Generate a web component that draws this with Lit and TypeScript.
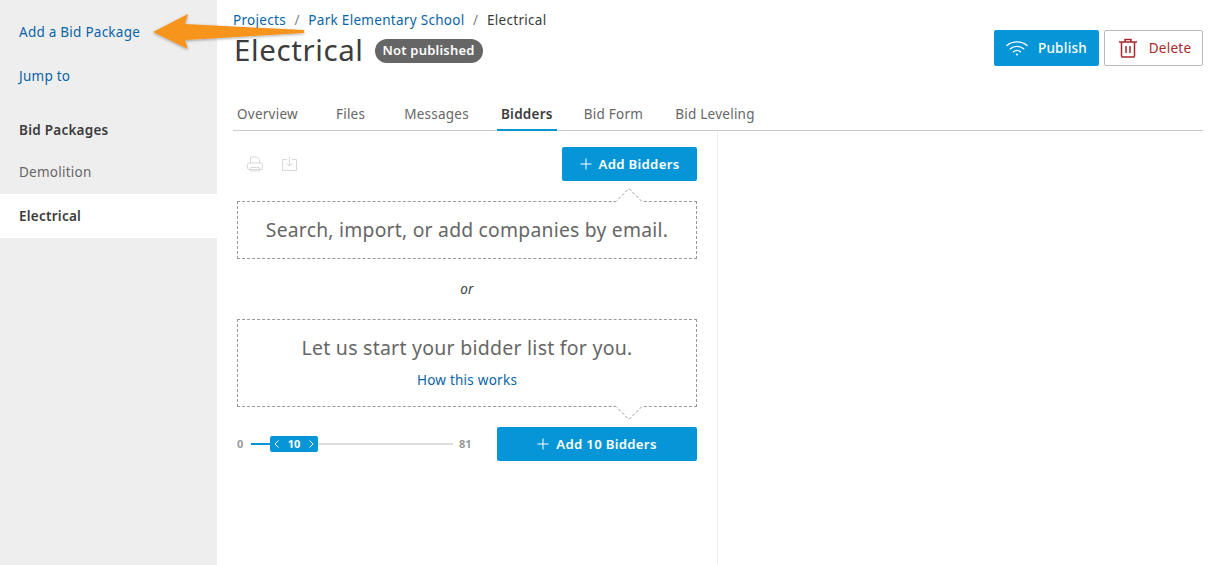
import { LitElement, html, css } from "lit";
import { customElement } from "lit/decorators.js";

const plus = html`<svg class="plus" width="12" height="12" viewBox="0 0 12 12"><path d="M6 .5v11M.5 6h11" stroke="#fff" stroke-width="1" fill="none"/></svg>`;

@customElement("app-root")
export class AppRoot extends LitElement {
  static styles = css`
    :host { display: block; height: 565px; overflow: hidden; font-family: "Noto Sans", sans-serif; font-size: 13.5px; color: #3c3c3c; letter-spacing: .25px; position: relative; background: #fff; }
    * { box-sizing: border-box; }
    a { color: #0b64a6; text-decoration: none; }
    .page { display: flex; height: 100%; }
    .side { width: 217px; flex: none; background: #eee; padding-top: 10px; display: flex; flex-direction: column; }
    .side > * { height: 44px; display: flex; align-items: center; padding: 0 0 0 19px; flex: none; }
    .side .head { margin-top: 10px; font-weight: 600; margin-bottom: -2px; }
    .side .item { color: #666; }
    .side .active { background: #fff; font-weight: 600; }
    .main { flex: 1; min-width: 0; padding: 0 10px 0 16px; display: flex; flex-direction: column; }
    .top { display: flex; justify-content: space-between; height: 101px; }
    .crumbs { height: 20px; margin-top: 10px; display: flex; align-items: center; gap: 8.5px; line-height: 20px; letter-spacing: .3px; }
    .crumbs .sep { color: #808080; }
    .titlerow { display: flex; align-items: center; gap: 11px; height: 40px; padding-top: 1px; }
    h1 { margin: 0 0 2px 1px; font-size: 29.5px; font-weight: 400; letter-spacing: .6px; }
    .badge { background: #666; color: #fff; height: 24px; border-radius: 12px; padding: 0 8px 1px; display: flex; align-items: center; font-weight: 600; font-size: 13px; letter-spacing: .2px; }
    .actions { display: flex; gap: 5px; margin-top: 30px; height: 36px; }
    .btn { height: 100%; border-radius: 2px; display: flex; align-items: center; justify-content: center; padding-bottom: 1px; }
    .pub { width: 105px; background: #0696d7; color: #fff; gap: 10px; font-weight: 500; }
    .del { width: 99px; background: #fff; border: 1px solid #bbb; color: #a8272b; gap: 12px; padding-left: 3px; }
    .tabs { display: flex; height: 30px; border-bottom: 1px solid #ccc; color: #666; }
    .tab { padding: 0 4px 4px; height: 30px; display: flex; align-items: center; }
    .tab.on { color: #3c3c3c; font-weight: 600; border-bottom: 2px solid #0696d7; padding-bottom: 2px; }
    .body { flex: 1; display: flex; min-height: 0; }
    .panel { width: 485px; padding: 16px 20px 0 4px; border-right: 1px solid #eee; display: flex; flex-direction: column; }
    .toolbar { display: flex; justify-content: space-between; height: 34px; flex: none; }
    .icons { display: flex; align-items: center; gap: 19px; padding-left: 10px; }
    .add { width: 135px; height: 34px; background: #0696d7; color: #fff; font-weight: 600; gap: 7px; font-size: 13.2px; letter-spacing: .3px; }
    .box { position: relative; border: 1px dashed #999; flex: none; display: flex; flex-direction: column; align-items: center; }
    .b1 { margin-top: 20px; height: 58px; justify-content: center; font-size: 19.3px; color: #666; padding-bottom: 2px; }
    .or { height: 60px; display: flex; align-items: center; justify-content: center; font-style: italic; color: #3c3c3c; flex: none; }
    .b2 { height: 88px; padding-top: 14px; font-size: 19.5px; color: #666; }
    .b2 a { font-size: 13.5px; margin-top: 10px; }
    .notch { position: absolute; left: 376px; }
    .n1 { top: -15px; }
    .n2 { bottom: -15px; }
    .sliderrow { display: flex; align-items: center; margin-top: 20px; height: 34px; flex: none; }
    .num { font-size: 11px; font-weight: 700; color: #999; width: 7px; letter-spacing: 0; padding-bottom: 1px; }
    .track { position: relative; width: 202px; height: 2px; background: #ddd; margin: 0 6px 0 7px; flex: none; }
    .fill { width: 19px; height: 2px; background: #0696d7; }
    .thumb { position: absolute; left: 19px; top: -7px; width: 48px; height: 16px; background: #0696d7; border-radius: 2px; color: #fff; font-size: 11px; font-weight: 700; display: flex; align-items: center; justify-content: space-between; padding: 0 4px 1px; letter-spacing: 0; }
    .sliderrow .add { margin-left: auto; width: 200px; }
    .arrow { position: absolute; left: 150px; top: 10px; }
    .t1 { margin-left: 30px; }
    .t2 { margin-left: 31px; }
    .t3 { margin-left: 24px; }
    .t4 { margin-left: 23px; }
    .t5 { margin-left: 24px; }
  `;

  render() {
    return html`
      <div class="page">
        <aside class="side">
          <a href="#">Add a Bid Package</a>
          <a href="#">Jump to</a>
          <div class="head">Bid Packages</div>
          <div class="item">Demolition</div>
          <div class="active">Electrical</div>
        </aside>
        <main class="main">
          <header class="top">
            <div>
              <div class="crumbs"><a href="#">Projects</a><span class="sep">/</span><a href="#">Park Elementary School</a><span class="sep">/</span><span>Electrical</span></div>
              <div class="titlerow"><h1>Electrical</h1><span class="badge">Not published</span></div>
            </div>
            <div class="actions">
              <div class="btn pub">
                <svg width="22" height="16" viewBox="0 0 22 16" fill="none" stroke="#fff" stroke-width="1.4" stroke-linecap="round"><path d="M1 5.5C6.5.7 15.500.7 21 5.500"/><path d="M4.300 8.800C8 5.500 14 5.500 17.700 8.800"/><path d="M7.500 11.800C9.500 10.200 12.500 10.200 14.500 11.800"/><circle cx="11" cy="14.500" r="1" fill="#fff" stroke="none"/></svg>
                Publish
              </div>
              <div class="btn del">
                <svg width="18" height="20" viewBox="0 0 18 20" fill="none" stroke="#a8272b" stroke-width="1.500"><path d="M0 4h18M6 4V1.500h6V4M2.500 4v14a1 1 0 0 0 1 1h11a1 1 0 0 0 1-1V4M7 8v7M11 8v7"/></svg>
                Delete
              </div>
            </div>
          </header>
          <nav class="tabs">
            <div class="tab">Overview</div>
            <div class="tab t1">Files</div>
            <div class="tab t2">Messages</div>
            <div class="tab on t3">Bidders</div>
            <div class="tab t4">Bid Form</div>
            <div class="tab t5">Bid Leveling</div>
          </nav>
          <section class="body">
            <div class="panel">
              <div class="toolbar">
                <div class="icons">
                  <svg width="16" height="16" viewBox="0 0 16 16" fill="none" stroke="#d8d8d8" stroke-width="1"><path d="M3.500 7V1h6.500l2.500 2.500V7"/><rect x=".5" y="7" width="15" height="6.500" rx="1.500"/><path d="M3.500 11.500h9v3.500h-9z"/></svg>
                  <svg width="15" height="14" viewBox="0 0 15 14" fill="none" stroke="#d8d8d8" stroke-width="1"><path d="M5 2.500H.5v11h14v-11H10M7.500 0v9M4.500 6l3 3 3-3"/></svg>
                </div>
                <div class="btn add">${plus}Add Bidders</div>
              </div>
              <div class="box b1">
                Search, import, or add companies by email.
                <svg class="notch n1" width="30" height="16" viewBox="0 0 30 16"><path d="M1 15.500L15 1.500 29 15.500" fill="#fff" stroke="#999" stroke-dasharray="3 2"/><path d="M1.500 15.500h27" stroke="#fff" stroke-width="2"/></svg>
              </div>
              <div class="or">or</div>
              <div class="box b2">
                Let us start your bidder list for you.
                <a href="#">How this works</a>
                <svg class="notch n2" width="30" height="16" viewBox="0 0 30 16"><path d="M1 .5L15 14.500 29 .5" fill="#fff" stroke="#999" stroke-dasharray="3 2"/><path d="M1.500 .5h27" stroke="#fff" stroke-width="2"/></svg>
              </div>
              <div class="sliderrow">
                <span class="num">0</span>
                <div class="track"><div class="fill"></div>
                  <div class="thumb">
                    <svg width="5" height="8" viewBox="0 0 5 8" fill="none" stroke="#fff"><path d="M4.500.5L1 4l3.500 3.500"/></svg>
                    10
                    <svg width="5" height="8" viewBox="0 0 5 8" fill="none" stroke="#fff"><path d="M.5.5L4 4 .5 7.500"/></svg>
                  </div>
                </div>
                <span class="num">81</span>
                <div class="btn add">${plus}Add 10 Bidders</div>
              </div>
            </div>
          </section>
        </main>
      </div>
      <svg class="arrow" width="160" height="46" viewBox="0 0 160 46">
        <defs><filter id="s" x="-10%" y="-20%" width="120%" height="150%"><feDropShadow dx="0" dy="1" stdDeviation="1.500" flood-color="#000" flood-opacity=".35"/></filter></defs>
        <path d="M3 22L38 4 35 14 154 20 154 23 35 30 38 39Z" fill="#f7941e" filter="url(#s)"/>
      </svg>
    `;
  }
}
